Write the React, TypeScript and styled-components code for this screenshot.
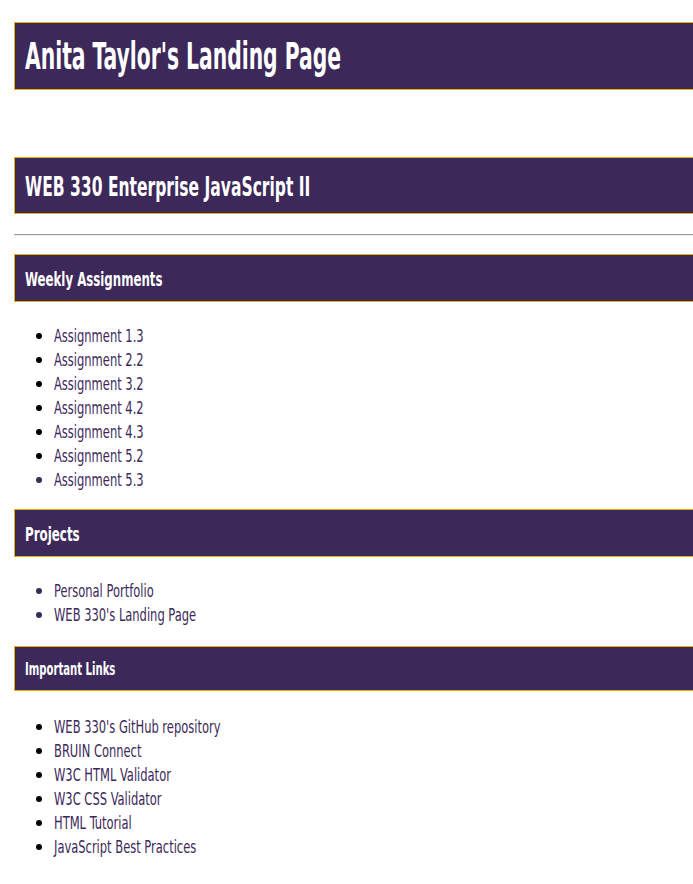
import React from "react";
import styled, { createGlobalStyle } from "styled-components";

const Global = createGlobalStyle`
  html, body { margin: 0; padding: 0; background: #ffffff; overflow-x: hidden; }
  body { font-family: "DejaVu Sans Condensed", "DejaVu Sans", sans-serif; font-stretch: condensed; }
`;

const PURPLE = "#3c2959";
const GOLD = "#e2b007";

const Page = styled.main`
  display: flex;
  flex-direction: column;
  padding: 22px 0 0 14px;
`;

const Banner = styled.div<{ $h: number; $size: number; $mb: number }>`
  display: flex;
  align-items: center;
  box-sizing: border-box;
  height: ${(p) => p.$h}px;
  margin: 0 0 ${(p) => p.$mb}px 0;
  padding: 1px 10px 0 10px;
  background: ${PURPLE};
  border: 1px solid ${GOLD};
  border-right: none;
  color: #ffffff;
  font-family: "DejaVu Sans Condensed", "DejaVu Sans", sans-serif;
  font-stretch: condensed;
  font-weight: 700;
  font-size: ${(p) => p.$size}px;
  white-space: nowrap;
  overflow: hidden;
`;

const Squeeze = styled.span<{ $sx: number }>`
  display: inline-block;
  white-space: nowrap;
  transform: scaleX(${(p) => p.$sx});
  transform-origin: left center;
`;

const Rule = styled.hr`
  margin: 20px 0 18px 0;
  border: none;
  border-top: 1px solid #9c9c9c;
  border-bottom: 1px solid #ececec;
  height: 0;
`;

const List = styled.ul<{ $mt: number; $mb: number }>`
  margin: ${(p) => p.$mt}px 0 ${(p) => p.$mb}px 0;
  padding-left: 40px;
`;

const Item = styled.li<{ $marker: string }>`
  line-height: 24px;
  font-size: 17.5px;
  &::marker {
    color: ${(p) => p.$marker};
    font-size: 18px;
  }
`;

const Link = styled.a`
  display: inline-block;
  position: relative;
  top: 1px;
  color: ${PURPLE};
  text-decoration: none;
  white-space: nowrap;
  transform: scaleX(0.73);
  transform-origin: left center;
`;

const weekly = [
  ["Assignment 1.3", "#000"],
  ["Assignment 2.2", "#000"],
  ["Assignment 3.2", "#000"],
  ["Assignment 4.2", "#000"],
  ["Assignment 4.3", "#000"],
  ["Assignment 5.2", "#000"],
  ["Assignment 5.3", PURPLE],
];

const projects = [
  ["Personal Portfolio", PURPLE],
  ["WEB 330's Landing Page", PURPLE],
];

const links = [
  ["WEB 330's GitHub repository", "#000"],
  ["BRUIN Connect", "#000"],
  ["W3C HTML Validator", "#000"],
  ["W3C CSS Validator", "#000"],
  ["HTML Tutorial", "#000"],
  ["JavaScript Best Practices", "#000"],
];

export default function App() {
  return (
    <>
      <Global />
      <Page>
        <Banner as="h1" $h={68} $size={37} $mb={67}>
          <Squeeze $sx={0.61}>Anita Taylor's Landing Page</Squeeze>
        </Banner>
        <Banner as="h2" $h={57} $size={27} $mb={0}>
          <Squeeze $sx={0.64}>WEB 330 Enterprise JavaScript II</Squeeze>
        </Banner>
        <Rule />
        <Banner as="h3" $h={48} $size={20} $mb={0}>
          <Squeeze $sx={0.655}>Weekly Assignments</Squeeze>
        </Banner>
        <List $mt={21} $mb={18}>
          {weekly.map(([t, c]) => (
            <Item key={t} $marker={c}>
              <Link href="#">{t}</Link>
            </Item>
          ))}
        </List>
        <Banner as="h3" $h={48} $size={20} $mb={0}>
          <Squeeze $sx={0.66}>Projects</Squeeze>
        </Banner>
        <List $mt={21} $mb={20}>
          {projects.map(([t, c]) => (
            <Item key={t} $marker={c}>
              <Link href="#">{t}</Link>
            </Item>
          ))}
        </List>
        <Banner as="h4" $h={45} $size={17} $mb={0}>
          <Squeeze $sx={0.66}>Important Links</Squeeze>
        </Banner>
        <List $mt={23} $mb={20}>
          {links.map(([t, c]) => (
            <Item key={t} $marker={c}>
              <Link href="#">{t}</Link>
            </Item>
          ))}
        </List>
      </Page>
    </>
  );
}
